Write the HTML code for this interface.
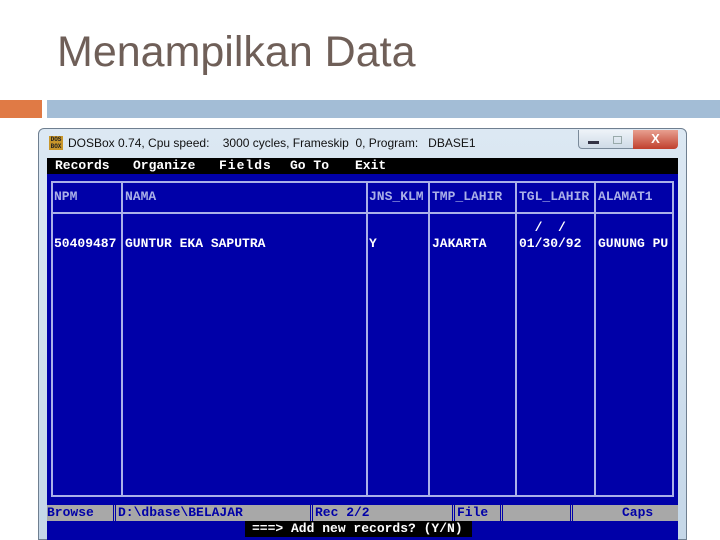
<!DOCTYPE html>
<html><head><style>
*{margin:0;padding:0;box-sizing:border-box}
body{width:720px;height:540px;background:#fff;position:relative;overflow:hidden;font-family:"Liberation Sans",sans-serif}
.a{position:absolute}
.m{font-family:"Liberation Mono",monospace;font-size:13px;font-weight:bold;white-space:pre;line-height:16px}
.vl{position:absolute;top:181px;height:316px;width:2px;background:#aab0e8}
</style></head><body>
<div class="a" style="left:57px;top:28px;font-size:43px;color:#6f5f58">Menampilkan Data</div>
<div class="a" style="left:0;top:100px;width:42px;height:18px;background:#e07a45"></div>
<div class="a" style="left:47px;top:100px;width:673px;height:18px;background:#a3bdd6"></div>
<!-- window -->
<div class="a" style="left:38px;top:128px;width:649px;height:412px;background:linear-gradient(#dce8f3,#c5d7e8);border:1px solid #6f7f90;border-radius:6px 6px 0 0"></div>
<div class="a" style="left:49px;top:136px;width:14px;height:14px;background:#c8962a;font:bold 6px 'Liberation Mono',monospace;color:#222;line-height:7px;text-align:center">DOS<br>BOX</div>
<div class="a" style="left:68px;top:136px;font-size:12px;color:#111;white-space:pre">DOSBox 0.74, Cpu speed:    3000 cycles, Frameskip  0, Program:   DBASE1</div>
<div class="a" style="left:578px;top:130px;width:56px;height:19px;border:1px solid #7a8a9a;border-top:none;border-radius:0 0 0 4px;background:linear-gradient(#eef3f8,#cfdbe7)"></div>
<div class="a" style="left:588px;top:141px;width:11px;height:3px;background:#334"></div>
<div class="a" style="left:613px;top:136px;width:9px;height:8px;border:1px solid #9aa"></div>
<div class="a" style="left:633px;top:130px;width:45px;height:19px;background:linear-gradient(#e8a090,#c0402e);border-radius:0 0 4px 0;color:#fff;font:bold 13px 'Liberation Sans';text-align:center;line-height:17px">X</div>
<!-- dos -->
<div class="a" style="left:47px;top:158px;width:631px;height:382px;background:#0000a8"></div>
<div class="a" style="left:47px;top:158px;width:631px;height:16px;background:#000"></div>
<div class="a m" style="left:55px;top:158px;color:#fff">Records</div>
<div class="a m" style="left:133px;top:158px;color:#fff">Organize</div>
<div class="a m" style="left:219px;top:158px;color:#fff;letter-spacing:1px">Fields</div>
<div class="a m" style="left:290px;top:158px;color:#fff">Go To</div>
<div class="a m" style="left:355px;top:158px;color:#fff">Exit</div>
<div class="a" style="left:51px;top:181px;width:623px;height:316px;border:2px solid #aab0e8"></div>
<div class="a" style="left:51px;top:212px;width:623px;height:2px;background:#aab0e8"></div>
<div class="vl" style="left:121px"></div><div class="vl" style="left:366px"></div><div class="vl" style="left:428px"></div><div class="vl" style="left:515px"></div><div class="vl" style="left:594px"></div>
<div class="a m" style="left:54px;top:189px;color:#aab0e8">NPM</div>
<div class="a m" style="left:125px;top:189px;color:#aab0e8">NAMA</div>
<div class="a m" style="left:369px;top:189px;color:#aab0e8">JNS_KLM</div>
<div class="a m" style="left:432px;top:189px;color:#aab0e8">TMP_LAHIR</div>
<div class="a m" style="left:519px;top:189px;color:#aab0e8">TGL_LAHIR</div>
<div class="a m" style="left:598px;top:189px;color:#aab0e8">ALAMAT1</div>
<div class="a m" style="left:54px;top:236px;color:#fff">50409487</div>
<div class="a m" style="left:125px;top:236px;color:#fff">GUNTUR EKA SAPUTRA</div>
<div class="a m" style="left:369px;top:236px;color:#fff">Y</div>
<div class="a m" style="left:432px;top:236px;color:#fff">JAKARTA</div>
<div class="a m" style="left:519px;top:220px;color:#fff">  /  /</div>
<div class="a m" style="left:519px;top:236px;color:#fff">01/30/92</div>
<div class="a m" style="left:598px;top:236px;color:#fff">GUNUNG PU</div>
<div class="a" style="left:47px;top:505px;width:631px;height:16px;background:#a8a8a8"></div>
<div class="a m" style="left:47px;top:505px;color:#0000a8">Browse</div>
<div class="a" style="left:113px;top:505px;width:3px;height:16px;border-left:1px solid #0000a8;border-right:1px solid #0000a8"></div>
<div class="a m" style="left:118px;top:505px;color:#0000a8">D:\dbase\BELAJAR</div>
<div class="a" style="left:310px;top:505px;width:3px;height:16px;border-left:1px solid #0000a8;border-right:1px solid #0000a8"></div>
<div class="a m" style="left:315px;top:505px;color:#0000a8">Rec 2/2</div>
<div class="a" style="left:452px;top:505px;width:3px;height:16px;border-left:1px solid #0000a8;border-right:1px solid #0000a8"></div>
<div class="a m" style="left:457px;top:505px;color:#0000a8">File</div>
<div class="a" style="left:500px;top:505px;width:3px;height:16px;border-left:1px solid #0000a8;border-right:1px solid #0000a8"></div>
<div class="a" style="left:570px;top:505px;width:3px;height:16px;border-left:1px solid #0000a8;border-right:1px solid #0000a8"></div>
<div class="a m" style="left:622px;top:505px;color:#0000a8">Caps</div>
<div class="a m" style="left:245px;top:521px;width:227px;height:16px;background:#000;color:#fff;padding-left:7px">===> Add new records? (Y/N)</div>
</body></html>
